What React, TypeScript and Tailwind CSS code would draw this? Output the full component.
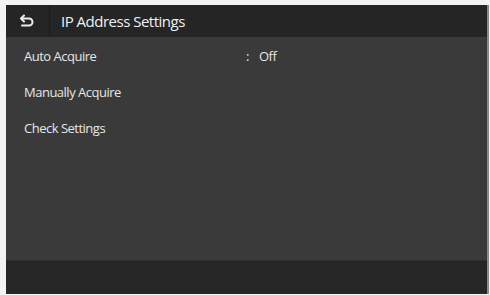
const rows = [
  { label: "Auto Acquire", value: "Off" },
  { label: "Manually Acquire" },
  { label: "Check Settings" },
];

function BackIcon() {
  return (
    <svg width="16" height="14" viewBox="0 0 16 14" fill="none" stroke="#ececec" strokeWidth="2" strokeLinecap="round" strokeLinejoin="round">
      <path d="M5 1.5 2 4.5l3 3" />
      <path d="M2.5 4.5h7.5a3.5 3.5 0 0 1 0 7H3" />
    </svg>
  );
}

export default function App() {
  return (
    <div className="w-[490px] h-[295px] bg-[#f3f3f3] pt-[5px] pl-[6px] pr-[1px] pb-[1px]" style={{ fontFamily: '"Open Sans", "Noto Sans", sans-serif' }}>
      <div className="flex flex-col h-full bg-[#3a3a3a] border-r-2 border-[#8a8a8a] overflow-hidden">
        <div className="flex h-[32px] bg-[#252525] shrink-0">
          <div className="flex w-[44px] items-center justify-center pr-[2px] border-r border-[#1c1c1c]">
            <BackIcon />
          </div>
          <div className="flex items-center pl-[11px] text-[15px] font-medium text-[#f0f0f0] tracking-[-0.5px]">IP Address Settings</div>
        </div>
        <div className="flex flex-col flex-1 pt-[2px]">
          {rows.map((r) => (
            <div key={r.label} className="flex h-[36px] items-center pl-[18px] text-[13px] font-medium text-[#e6e6e6] tracking-[-0.5px]">
              <span className="w-[222px]">{r.label}</span>
              {r.value && (
                <span>
                  <span className="mr-[10px]">:</span>
                  {r.value}
                </span>
              )}
            </div>
          ))}
        </div>
        <div className="h-[34px] shrink-0 bg-[#262626] border-t border-[#2f2f2f]" />
      </div>
    </div>
  );
}
